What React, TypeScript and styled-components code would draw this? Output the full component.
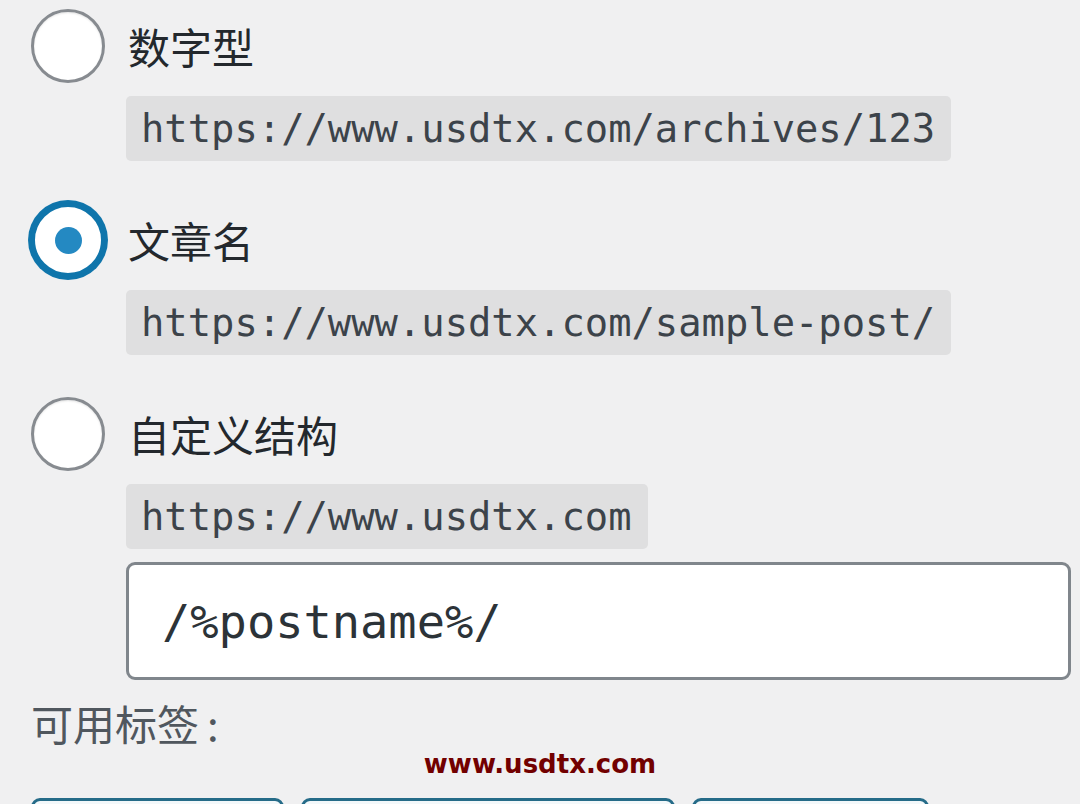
import styled, { createGlobalStyle } from 'styled-components';

const GlobalStyle = createGlobalStyle`
  html, body {
    margin: 0;
    padding: 0;
    background: #f0f0f1;
    overflow: hidden;
  }
  * {
    box-sizing: border-box;
  }
`;

const PageWrapper = styled.main`
  width: 1080px;
  padding-top: 9px;
  font-family: 'Noto Sans CJK SC', 'Noto Sans', sans-serif;
  color: #1d2327;
`;

const Section = styled.section`
  padding: 0 9px 0 31px;
`;

const OptionList = styled.div`
  display: flex;
  flex-direction: column;
  gap: 42px;
`;

const Option = styled.label`
  display: flex;
  gap: 21px;
`;

const Radio = styled.span<{ $checked?: boolean }>`
  flex: 0 0 74px;
  width: 74px;
  height: 74px;
  border-radius: 50%;
  background: #fff;
  display: flex;
  align-items: center;
  justify-content: center;
  border: ${({ $checked }) => ($checked ? '4px solid #0f75ab' : '3px solid #878b90')};
  box-shadow: ${({ $checked }) =>
    $checked ? '0 0 0 3px #0f75ab' : 'inset 0 1px 2px rgba(0, 0, 0, 0.1)'};

  &::after {
    content: '';
    display: ${({ $checked }) => ($checked ? 'block' : 'none')};
    width: 27px;
    height: 27px;
    border-radius: 50%;
    background: #2489c2;
  }
`;

const Content = styled.div`
  flex: 1;
  display: flex;
  flex-direction: column;
  align-items: flex-start;
`;

const OptionLabel = styled.span`
  height: 74px;
  display: flex;
  align-items: center;
  padding-left: 2px;
  font-size: 42px;
  line-height: 1;
  color: #23282d;
`;

const CodeBox = styled.code`
  margin-top: 13px;
  height: 65px;
  display: inline-flex;
  align-items: center;
  padding: 0 16px 0 15px;
  background: #dfdfe0;
  border-radius: 5px;
  font-family: 'DejaVu Sans Mono', monospace;
  font-size: 38.8px;
  color: #3c434a;
  white-space: nowrap;
`;

const StructureInput = styled.input`
  margin-top: 13px;
  width: 100%;
  height: 118px;
  padding: 0 0 0 33px;
  border: 3px solid #80868c;
  border-radius: 9px;
  background: #fff;
  font-family: 'DejaVu Sans Mono', monospace;
  font-size: 47px;
  color: #2c3338;
  outline: none;
`;

const TagsTitle = styled.p`
  margin: 22px 0 0;
  font-size: 42px;
  line-height: 1;
  color: #50575e;
`;

const Colon = styled.span`
  margin-left: 8px;
`;

const Watermark = styled.div`
  margin-top: 7px;
  text-align: center;
  font-family: 'DejaVu Sans', sans-serif;
  font-weight: bold;
  font-size: 26px;
  line-height: 1;
  color: #720000;
`;

const TagRow = styled.div`
  margin-top: 21px;
  padding-left: 31px;
  display: flex;
  gap: 17px;
`;

const TagButton = styled.button<{ $width: number }>`
  width: ${({ $width }) => $width}px;
  height: 100px;
  border: 3px solid #256b88;
  border-radius: 9px;
  background: #f3f8fa;
  color: #2271b1;
  font-family: 'DejaVu Sans Mono', monospace;
  font-size: 34px;
`;

const options = [
  { label: '数字型', code: 'https://www.usdtx.com/archives/123', checked: false },
  { label: '文章名', code: 'https://www.usdtx.com/sample-post/', checked: true },
];

const tags = [
  { name: '%year%', width: 253 },
  { name: '%monthnum%', width: 374 },
  { name: '%day%', width: 237 },
];

function App() {
  return (
    <PageWrapper>
      <GlobalStyle />
      <Section>
        <OptionList>
          {options.map((option) => (
            <Option key={option.label}>
              <Radio $checked={option.checked} />
              <Content>
                <OptionLabel>{option.label}</OptionLabel>
                <CodeBox>{option.code}</CodeBox>
              </Content>
            </Option>
          ))}
          <Option>
            <Radio />
            <Content>
              <OptionLabel>自定义结构</OptionLabel>
              <CodeBox>https://www.usdtx.com</CodeBox>
              <StructureInput type="text" defaultValue="/%postname%/" />
            </Content>
          </Option>
        </OptionList>
        <TagsTitle>
          可用标签<Colon>:</Colon>
        </TagsTitle>
      </Section>
      <Watermark>www.usdtx.com</Watermark>
      <TagRow>
        {tags.map((tag) => (
          <TagButton key={tag.name} $width={tag.width}>
            {tag.name}
          </TagButton>
        ))}
      </TagRow>
    </PageWrapper>
  );
}

export default App;
